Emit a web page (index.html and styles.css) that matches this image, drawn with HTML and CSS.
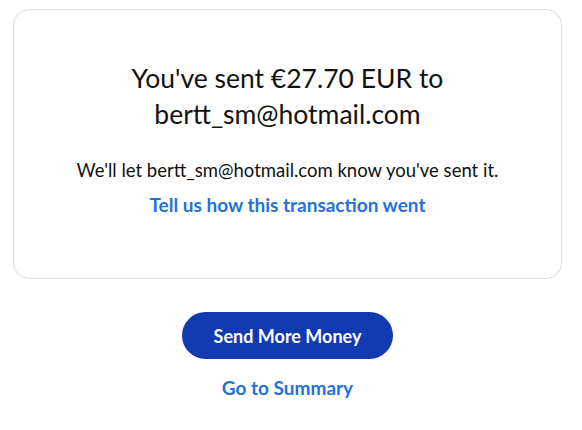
FILE: index.html
```html
<!DOCTYPE html>
<html lang="en">
<head>
<meta charset="utf-8">
<title>Sent</title>
<link rel="stylesheet" href="styles.css">
</head>
<body>
<main class="page">
  <section class="card">
    <h1 class="title">You've sent €27.70 EUR to bertt_sm@hotmail.com</h1>
    <p class="note">We'll let bertt_sm@hotmail.com know you've sent it.</p>
    <a class="link feedback" href="#">Tell us how this transaction went</a>
  </section>
  <div class="actions">
    <a class="btn-primary" href="#">Send More Money</a>
    <a class="link summary" href="#">Go to Summary</a>
  </div>
</main>
</body>
</html>
```
FILE: styles.css
```css
* { box-sizing: border-box; }
html, body { margin: 0; background: #fff; }
body {
  font-family: Lato, "Open Sans", sans-serif;
  color: #111;
}
.page {
  padding: 9px 20px 0 13px;
  display: flex;
  flex-direction: column;
  align-items: stretch;
}
.card {
  border: 1px solid #dcdcdc;
  border-radius: 16px;
  height: 270px;
  padding: 50px 20px 0;
  display: flex;
  flex-direction: column;
  align-items: center;
  text-align: center;
}
.title {
  margin: 0;
  font-size: 26.5px;
  font-weight: 400;
  line-height: 36px;
  max-width: 380px;
  color: #111;
}
.note {
  margin: 26px 0 0;
  font-size: 18.5px;
  line-height: 24px;
}
.link {
  color: #2172d9;
  font-weight: 700;
  text-decoration: none;
  font-size: 19px;
  line-height: 24px;
}
.feedback { margin-top: 11px; }
.actions {
  display: flex;
  flex-direction: column;
  align-items: center;
  padding-top: 33px;
}
.btn-primary {
  width: 211px;
  height: 47px;
  border-radius: 24px;
  background: #1139b0;
  color: #fff;
  font-weight: 700;
  font-size: 18px;
  display: flex;
  align-items: center;
  justify-content: center;
  text-decoration: none;
}
.summary { margin-top: 17px; }
```
